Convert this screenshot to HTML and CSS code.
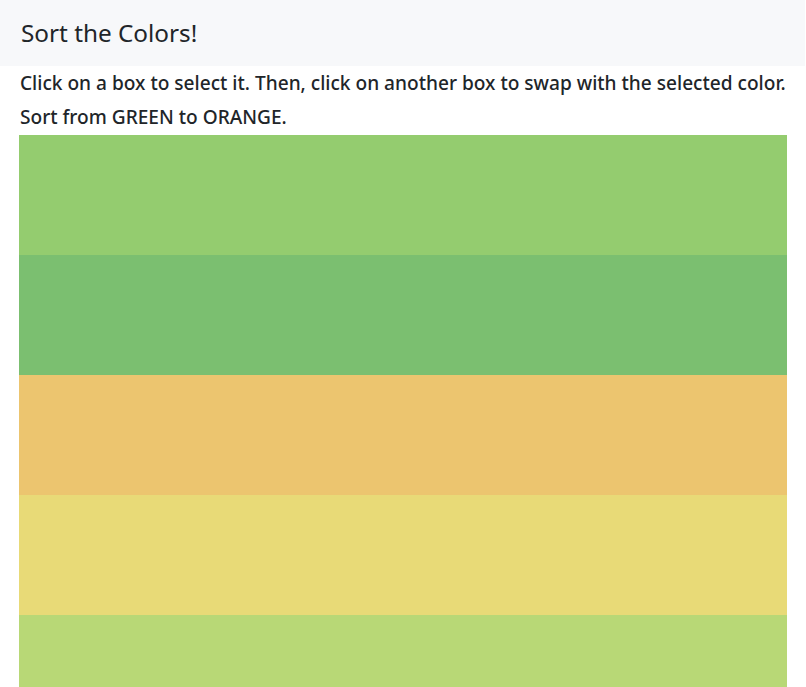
FILE: index.html
```html
<!DOCTYPE html>
<html>
<head>
<meta charset="utf-8">
<link rel="stylesheet" href="styles.css">
</head>
<body>
<header class="top">
  <h1 class="title">Sort the Colors!</h1>
</header>
<main class="content">
  <p class="line">Click on a box to select it. Then, click on another box to swap with the selected color.</p>
  <p class="line">Sort from GREEN to ORANGE.</p>
  <div class="boxes">
    <div class="box c1"></div>
    <div class="box c2"></div>
    <div class="box c3"></div>
    <div class="box c4"></div>
    <div class="box c5"></div>
  </div>
</main>
</body>
</html>
```
FILE: styles.css
```css
html, body {
  margin: 0;
  padding: 0;
  background: #fff;
}
body {
  font-family: "Noto Sans", "Open Sans", sans-serif;
  color: #212529;
}
.top {
  width: 805px;
  height: 66px;
  background: #f7f8fa;
  display: flex;
  align-items: center;
  padding: 0 21px;
  box-sizing: border-box;
}
.title {
  margin: 0;
  font-size: 24.3px;
  font-weight: 400;
  line-height: 1;
}
.content {
  padding: 0 19px;
}
.line {
  margin: 0;
  padding-left: 1px;
  font-size: 19.1px;
  font-weight: 500;
  line-height: 34px;
  height: 34px;
  white-space: nowrap;
}
.boxes {
  width: 768px;
  display: flex;
  flex-direction: column;
  margin-top: 1px;
}
.box {
  height: 120px;
}
.c1 { background: #94cc6f; }
.c2 { background: #7bbf70; }
.c3 { background: #ecc56f; }
.c4 { background: #e8da77; }
.c5 { background: #b8d876; }
```
